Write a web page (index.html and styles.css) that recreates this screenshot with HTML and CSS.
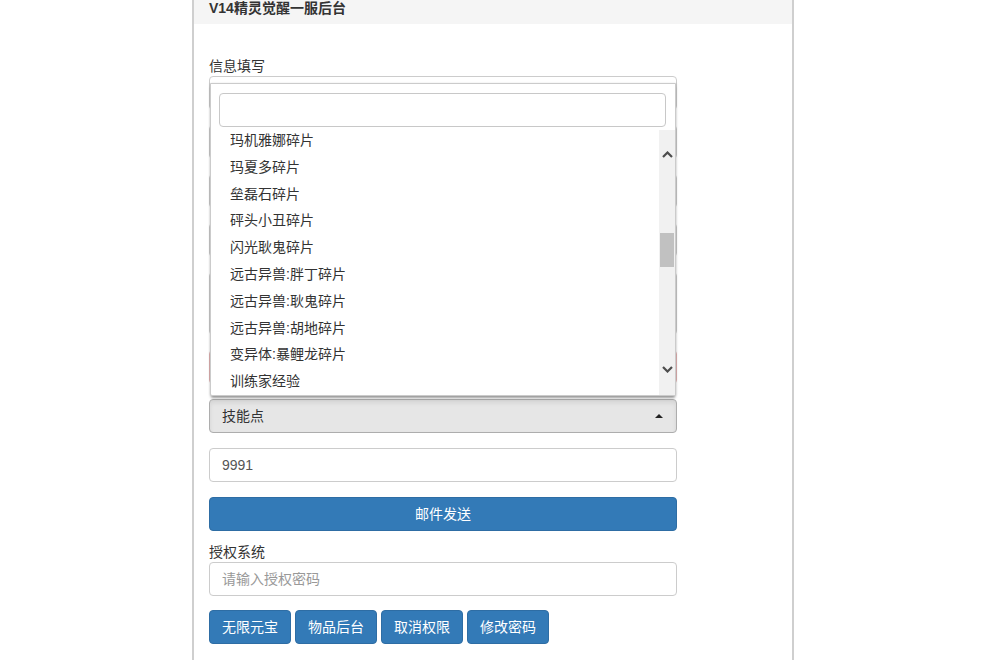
FILE: index.html
```html
<!DOCTYPE html>
<html lang="zh-CN">
<head>
<meta charset="utf-8">
<title>V14精灵觉醒一服后台</title>
<link rel="stylesheet" href="styles.css">
</head>
<body>
<div class="panel">
  <div class="panel-heading">V14精灵觉醒一服后台</div>
  <div class="panel-body">
    <form class="form">
      <label class="label">信息填写</label>
      <div class="stack">
        <div class="select-wrap">
          <div class="select">玛机雅娜碎片</div>
          <div class="dropdown">
            <div class="search-box"><input class="search" type="text"></div>
            <div class="results">
              <ul class="options">
                <li>玛机雅娜碎片</li>
                <li>玛夏多碎片</li>
                <li>垒磊石碎片</li>
                <li>砰头小丑碎片</li>
                <li>闪光耿鬼碎片</li>
                <li>远古异兽:胖丁碎片</li>
                <li>远古异兽:耿鬼碎片</li>
                <li>远古异兽:胡地碎片</li>
                <li>变异体:暴鲤龙碎片</li>
                <li>训练家经验</li>
              </ul>
              <div class="scrollbar">
                <div class="sb-btn">
                  <svg width="11" height="7" viewBox="0 0 11 7"><polyline points="1,6 5.5,1.5 10,6" fill="none" stroke="#4d4d4d" stroke-width="2.2"/></svg>
                </div>
                <div class="sb-track"><div class="sb-thumb"></div></div>
                <div class="sb-btn">
                  <svg width="11" height="7" viewBox="0 0 11 7"><polyline points="1,1 5.5,5.5 10,1" fill="none" stroke="#4d4d4d" stroke-width="2.2"/></svg>
                </div>
              </div>
            </div>
          </div>
        </div>
        <input class="field" type="text">
        <input class="field" type="text">
        <input class="field" type="text">
        <textarea class="field area"></textarea>
        <input class="field error" type="text">
        <div class="select open">
          <span>技能点</span>
          <span class="caret"></span>
        </div>
        <input class="field" type="text" value="9991">
        <button type="button" class="btn btn-block">邮件发送</button>
      </div>
      <label class="label label-gap">授权系统</label>
      <input class="field" type="text" placeholder="请输入授权密码">
      <div class="btn-row">
        <button type="button" class="btn">无限元宝</button>
        <button type="button" class="btn">物品后台</button>
        <button type="button" class="btn">取消权限</button>
        <button type="button" class="btn">修改密码</button>
      </div>
    </form>
  </div>
</div>
</body>
</html>
```
FILE: styles.css
```css
* { box-sizing: border-box; }
html, body { margin: 0; padding: 0; background: #fff; }
body {
  font-family: "Liberation Sans", "Noto Sans CJK SC", sans-serif;
  font-size: 14px;
  color: #333;
  overflow: hidden;
  height: 660px;
}
.panel {
  width: 602px;
  margin-left: 192px;
  min-height: 660px;
  border-left: 2px solid #cfcfcf;
  border-right: 2px solid #cfcfcf;
  background: #fff;
}
.panel-heading {
  background: #f5f5f5;
  height: 24px;
  padding: 0 15px;
  line-height: 17px;
  font-weight: bold;
  color: #333;
}
.panel-body {
  padding: 33px 15px 16px;
}
.form { width: 468px; }
.label {
  display: block;
  line-height: 19px;
  height: 19px;
  color: #333;
}
.label-gap { margin-top: 12px; }
.stack {
  display: flex;
  flex-direction: column;
  gap: 15px;
}
.field {
  display: block;
  width: 100%;
  height: 34px;
  padding: 6px 12px;
  border: 1px solid #ccc;
  border-radius: 4px;
  font-family: inherit;
  font-size: 14px;
  color: #555;
  background: #fff;
  outline: none;
}
.field::placeholder { color: #999; }
.area { height: 63px; resize: none; }
.error { border-color: #e3b4b4; }
.select-wrap { position: relative; }
.select {
  height: 34px;
  border: 1px solid #ccc;
  border-radius: 4px;
  padding: 0 12px;
  line-height: 32px;
  color: #333;
  background: #fff;
}
.select.open {
  display: flex;
  align-items: center;
  justify-content: space-between;
  background: #e6e6e6;
  border-color: #adadad;
  box-shadow: inset 0 3px 4px rgba(0,0,0,.08);
  padding-right: 12px;
}
.caret {
  width: 0;
  height: 0;
  border-left: 4px solid transparent;
  border-right: 4px solid transparent;
  border-bottom: 4px solid #222;
  margin-right: 1px;
}
.dropdown {
  position: absolute;
  top: 7px;
  left: 1px;
  right: 1px;
  z-index: 5;
  background: #fff;
  border: 1px solid #cbcbcb;
  border-radius: 0 0 2px 2px;
  box-shadow: 0 3px 3px -1px rgba(0,0,0,.4), 1px 0 2px rgba(0,0,0,.08), -1px 0 2px rgba(0,0,0,.06);
}
.search-box { padding: 9px 9px 0 8px; }
.search {
  display: block;
  width: 100%;
  height: 34px;
  border: 1px solid #c8c8c8;
  border-radius: 4px;
  background: #fff;
  outline: none;
}
.results {
  display: flex;
  height: 268px;
}
.options {
  flex: 1;
  list-style: none;
  margin: 0;
  padding: 0;
}
.options li {
  height: 26.8px;
  line-height: 26.8px;
  padding-left: 19px;
  color: #333;
  white-space: nowrap;
}
.scrollbar {
  width: 16px;
  display: flex;
  flex-direction: column;
  background: #f1f1f1;
  margin-top: 3px;
}
.sb-btn {
  height: 49px;
  display: flex;
  align-items: center;
  justify-content: center;
}
.sb-btn:last-child { height: 52px; }
.sb-track { flex: 1; padding-top: 54px; }
.sb-thumb {
  height: 34px;
  margin: 0 1px;
  background: #c1c1c1;
}
.btn {
  display: inline-block;
  height: 34px;
  padding: 0 12px;
  border: 1px solid #2e6da4;
  border-radius: 4px;
  background: #337ab7;
  color: #fff;
  font-family: inherit;
  font-size: 14px;
  line-height: 32px;
  cursor: pointer;
}
.btn-block { display: block; width: 100%; }
.btn-row {
  display: flex;
  gap: 4px;
  margin-top: 14px;
}
.btn-row .btn { width: 82px; padding: 0; }
```
